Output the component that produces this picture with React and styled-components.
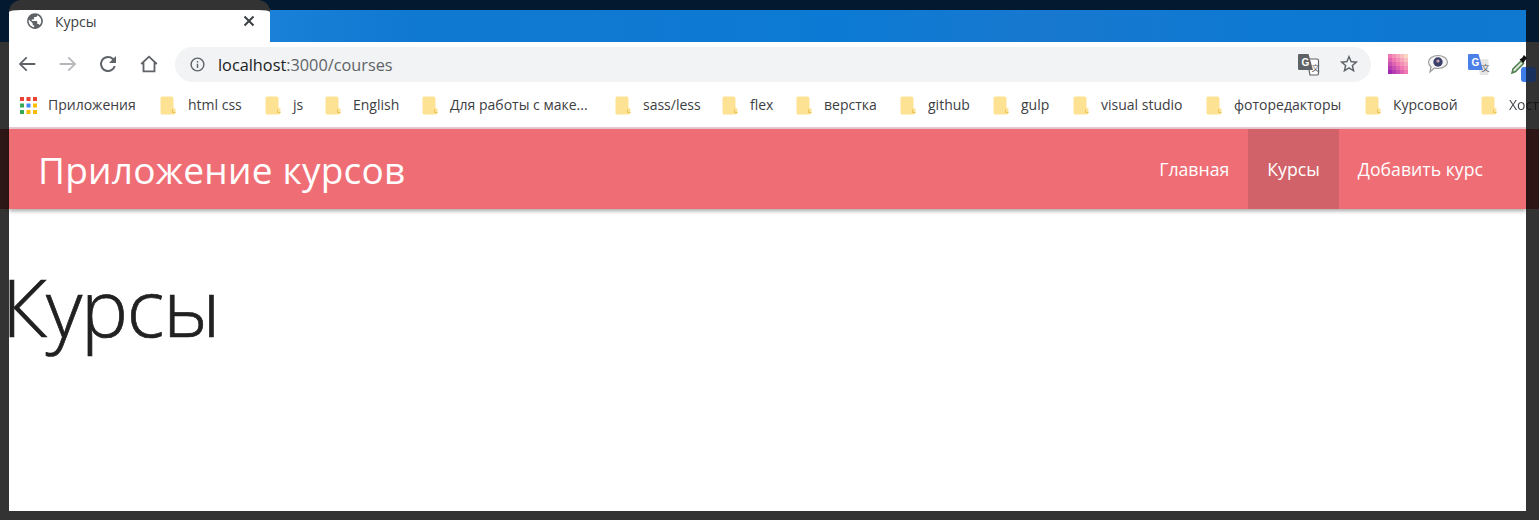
import React from 'react';
import styled, { createGlobalStyle } from 'styled-components';

const GlobalStyle = createGlobalStyle`
  html, body {
    margin: 0;
    padding: 0;
    background: #333;
  }
`;

const Page = styled.div`
  width: 1539px;
  height: 520px;
  overflow: hidden;
  display: flex;
  flex-direction: column;
  background: #333;
  font-family: "Open Sans", "Noto Sans", sans-serif;
`;

const TabStrip = styled.div`
  height: 42px;
  flex: none;
  display: flex;
  padding: 0 13px 0 9px;
  background: #03192f;
`;

const Tab = styled.div`
  width: 261px;
  box-sizing: border-box;
  border-top: 10px solid #333;
  border-radius: 12px 12px 0 0;
  background: #fff;
  display: flex;
  align-items: center;
  padding: 0 14px 10px 17px;
  font-size: 14px;
  color: #3c4043;
`;

const TabTitle = styled.span`
  margin-left: 11px;
  flex: 1;
`;

const Wallpaper = styled.div`
  flex: 1;
  margin-top: 10px;
  background: linear-gradient(90deg, #1a80d8 0%, #0f78d0 12%, #1079d2 26%, #0c7ad4 45%, #1878cf 62%, #0d79d3 80%, #0f78d0 100%);
`;

const Toolbar = styled.div`
  height: 45px;
  flex: none;
  margin: 0 13px 0 9px;
  background: #fff;
  display: flex;
  align-items: center;
  padding-bottom: 1px;
  box-sizing: border-box;
  position: relative;
`;

const NavGroup = styled.div`
  display: flex;
  flex: none;
  margin-left: -2px;
`;

const NavIcon = styled.span`
  width: 40.5px;
  height: 24px;
  display: flex;
  justify-content: center;
  align-items: center;
  flex: none;
`;

const Omnibox = styled.div`
  width: 1196px;
  height: 35px;
  flex: none;
  box-sizing: border-box;
  margin-left: 6px;
  padding: 0 11px 0 14px;
  border-radius: 18px;
  background: #f1f3f4;
  display: flex;
  align-items: center;
  font-size: 16.3px;
  color: #5f6368;
`;

const Host = styled.span`
  color: #202124;
  margin: 1px 0 0 12px;
`;

const Path = styled.span`
  flex: 1;
  margin-top: 1px;
`;

const OmniAction = styled.span`
  display: flex;
  margin-left: ${p => p.$gap || 0}px;
`;

const Extensions = styled.div`
  display: flex;
  align-items: center;
  flex: none;
  margin-left: 17px;
`;

const Extension = styled.span`
  display: flex;
  margin-left: ${p => p.$gap || 0}px;
`;

const Badge = styled.span`
  position: absolute;
  left: 1512px;
  top: 25px;
  width: 15px;
  height: 15px;
  border-radius: 3px;
  background: linear-gradient(90deg, #3d7de8 5px, #17305c 5px);
`;

const BookmarksBar = styled.div`
  height: 42px;
  flex: none;
  margin: 0 13px 0 9px;
  box-sizing: border-box;
  background: #fff;
  border-bottom: 2px solid #eccdd4;
  display: flex;
  align-items: center;
  padding: 0 0 4px 11px;
  gap: 24px;
  white-space: nowrap;
  font-size: 14px;
  color: #3c4043;
`;

const Bookmark = styled.div`
  display: flex;
  align-items: center;
  gap: ${p => p.$gap || 12}px;
  flex: none;
`;

const BookmarkLabel = styled.span`
  display: block;
  width: ${p => p.$width}px;
  margin-bottom: 2px;
`;

const ClippedLabel = styled.span`
  display: block;
  margin-bottom: 2px;
  background: linear-gradient(90deg, #3c4043 17px, #161616 17px);
  -webkit-background-clip: text;
  background-clip: text;
  color: transparent;
`;

const NavBand = styled.div`
  height: 80px;
  flex: none;
  background: #2e1616;
  padding: 0 13px 0 9px;
  position: relative;
`;

const NavBar = styled.nav`
  height: 100%;
  background: #ef6e75;
  box-shadow: 0 2px 4px rgba(0, 0, 0, 0.35);
  display: flex;
  justify-content: space-between;
  padding: 0 24px 0 29px;
  color: #fff;
`;

const Brand = styled.div`
  align-self: center;
  font-size: 37px;
  letter-spacing: 0.25px;
`;

const NavLinks = styled.ul`
  display: flex;
  margin: 0;
  padding: 0;
  list-style: none;
`;

const NavLink = styled.li`
  display: flex;
  align-items: center;
  padding: 0 19px;
  font-size: 17.7px;
  background: ${p => (p.$active ? '#d26269' : 'transparent')};
`;

const Main = styled.main`
  flex: 1;
  margin: 0 13px 9px 9px;
  background: #fff;
`;

const Heading = styled.h1`
  margin: 48px 0 0 -7px;
  font-size: 79px;
  line-height: 100px;
  font-weight: 300;
  letter-spacing: -1.2px;
  color: #212121;
  -webkit-text-stroke: 0.7px #212121;
`;

const Globe = () => (
  <svg width="18" height="18" viewBox="0 0 24 24" fill="#5f6368">
    <path d="M12 1.500C6.200 1.500 1.500 6.200 1.500 12S6.200 22.500 12 22.500 22.500 17.800 22.500 12 17.800 1.500 12 1.500zM10.900 20.300c-4.100-.5-7.300-4-7.300-8.300 0-.6.100-1.300.2-1.900l5 5v1c0 1.200 1 2.100 2.100 2.100v2.100zm7.200-2.700c-.3-.9-1.100-1.500-2-1.500H15V13c0-.6-.5-1-1-1H7.700V9.900h2.100c.6 0 1-.5 1-1V6.800h2.100c1.200 0 2.100-1 2.100-2.100v-.4c3.100 1.200 5.300 4.200 5.300 7.700 0 2.200-.8 4.200-2.200 5.600z" />
  </svg>
);

const CloseIcon = () => (
  <svg width="14" height="14" viewBox="0 0 14 14" stroke="#3c4043" strokeWidth="2">
    <path d="M2.500 2.500l9 9M11.500 2.500l-9 9" />
  </svg>
);

const ArrowIcon = ({ flip, color }) => (
  <svg width="22" height="22" viewBox="0 0 24 24" fill={color} style={flip ? { transform: 'scaleX(-1)' } : undefined}>
    <path d="M21 11H6.800l5.600-5.600L11 4l-8 8 8 8 1.400-1.400L6.800 13H21z" />
  </svg>
);

const ReloadIcon = () => (
  <svg width="24" height="24" viewBox="0 0 24 24" fill="#5f6368">
    <path d="M17.650 6.350A7.960 7.960 0 0 0 12 4a8 8 0 1 0 7.730 10h-2.080A6 6 0 1 1 12 6c1.660 0 3.140.69 4.220 1.780L13 11h7V4z" />
  </svg>
);

const HomeIcon = () => (
  <svg width="22" height="22" viewBox="0 0 24 24" fill="none" stroke="#5f6368" strokeWidth="2">
    <path d="M3.500 12L12 4l8.500 8M6 10.500V20h12v-9.500" />
  </svg>
);

const InfoIcon = () => (
  <svg width="17" height="17" viewBox="0 0 24 24" fill="#5f6368">
    <path d="M12 2a10 10 0 1 0 0 20 10 10 0 0 0 0-20zm0 18a8 8 0 1 1 0-16 8 8 0 0 1 0 16zM11 7h2v2h-2zm0 4h2v6h-2z" />
  </svg>
);

const TranslateIcon = ({ blue }) => (
  <svg width="23" height="23" viewBox="0 0 23 23">
    <path d="M10 6h10a1.500 1.500 0 0 1 1.500 1.500v13a1.500 1.500 0 0 1-1.500 1.500h-7z" fill={blue ? '#e6e6e6' : '#fff'} stroke={blue ? 'none' : '#5f6368'} strokeWidth="1.200" />
    <path d="M2 1h9.500l4.500 16H2.500A1.500 1.500 0 0 1 1 15.500V2a1 1 0 0 1 1-1z" fill={blue ? '#4a80e8' : '#5f6368'} />
    <text x="4.500" y="12.500" fontSize="10" fontWeight="700" fill="#fff" fontFamily="Liberation Sans, sans-serif">G</text>
    <text x="14.500" y="18" fontSize="8" fill="#5f6368" fontFamily="Noto Sans CJK SC, sans-serif">文</text>
  </svg>
);

const StarIcon = () => (
  <svg width="22" height="22" viewBox="0 0 24 24" fill="#5f6368">
    <path d="M22 9.240l-7.190-.62L12 2 9.190 8.630 2 9.240l5.460 4.730L5.820 21 12 17.270 18.180 21l-1.630-7.030L22 9.240zM12 15.400l-3.760 2.270 1-4.280-3.320-2.880 4.380-.38L12 6.100l1.710 4.040 4.380.38-3.320 2.880 1 4.280L12 15.400z" />
  </svg>
);

// mosaic of pink squares, peach in the top right corner, purple bottom left
const mix = (a, b, t) => a.map((v, i) => Math.round(v + (b[i] - v) * t));
const mosaic = Array.from({ length: 25 }, (_, i) => {
  const col = i % 5;
  const row = Math.floor(i / 5);
  const t = (4 - col + row) / 8;
  const rgb = t < 0.5
    ? mix([253, 214, 196], [241, 120, 178], t * 2)
    : mix([241, 120, 178], [158, 40, 176], (t - 0.5) * 2);
  return { col, row, fill: `rgb(${rgb.join(',')})` };
});

const PaletteTile = () => (
  <svg width="20" height="20" viewBox="0 0 20 20">
    {mosaic.map(({ col, row, fill }) => (
      <rect key={`${col}-${row}`} x={col * 4} y={row * 4} width="4" height="4" fill={fill} />
    ))}
  </svg>
);

const BubbleIcon = () => (
  <svg width="22" height="20" viewBox="0 0 22 20">
    <path d="M11 1.500c5.300 0 9.500 2.900 9.500 6.500s-4.200 6.500-9.500 6.500c-1.200 0-2.400-.2-3.500-.5L3 18l1-5.300C2.300 11.500 1.500 9.900 1.500 8c0-3.600 4.200-6.500 9.500-6.500z" fill="#f4f4f4" stroke="#9a9a9a" strokeWidth="1.200" />
    <circle cx="11" cy="8" r="4.700" fill="#3d3f6b" />
    <circle cx="11" cy="7" r="1.600" fill="#c8a8b0" />
  </svg>
);

const DropperIcon = () => (
  <svg width="17" height="20" viewBox="0 0 17 20">
    <path d="M1 19l1-4 8-8 2.500 2.500-8 8z" fill="#dfe8dc" stroke="#4f7f4c" strokeWidth="1.500" />
    <path d="M8.500 5.500l2.500-1.500 2-3 3 3-2 2.500-1.500 2.500z" fill="#111" />
  </svg>
);

const AppsIcon = () => {
  const colors = ['#ea4335', '#ea4335', '#ea4335', '#34a853', '#4285f4', '#fbbc05', '#34a853', '#fbbc05', '#fbbc05'];
  return (
    <svg width="17" height="17" viewBox="0 0 17 17">
      {colors.map((c, i) => (
        <rect key={i} x={(i % 3) * 6.5} y={Math.floor(i / 3) * 6.5} width="4" height="4" fill={c} />
      ))}
    </svg>
  );
};

const FolderIcon = () => (
  <svg width="16" height="19" viewBox="0 0 16 19">
    <path d="M2 .5h9.500a2 2 0 0 1 2 2V12h.5a1.500 1.500 0 0 1 1.500 1.500V16.500a2 2 0 0 1-2 2H2A1.500 1.500 0 0 1 .5 17V2A1.500 1.500 0 0 1 2 .5z" fill="#fde293" />
    <path d="M12.500 13.500v3M12.500 16.500h3" stroke="#e9c25c" strokeWidth="1" fill="none" />
  </svg>
);

const bookmarks = [
  ['html css', 53],
  ['js', 8],
  ['English', 45],
  ['Для работы с маке...', 141],
  ['sass/less', 55],
  ['flex', 22],
  ['верстка', 52],
  ['github', 41],
  ['gulp', 28],
  ['visual studio', 81],
  ['фоторедакторы', 107],
  ['Курсовой', 64],
];

const App = () => (
  <Page>
    <GlobalStyle />
    <TabStrip>
      <Tab>
        <Globe />
        <TabTitle>Курсы</TabTitle>
        <CloseIcon />
      </Tab>
      <Wallpaper />
    </TabStrip>
    <Toolbar>
      <NavGroup>
        <NavIcon><ArrowIcon color="#5f6368" /></NavIcon>
        <NavIcon><ArrowIcon flip color="#b5b7ba" /></NavIcon>
        <NavIcon><ReloadIcon /></NavIcon>
        <NavIcon><HomeIcon /></NavIcon>
      </NavGroup>
      <Omnibox>
        <InfoIcon />
        <Host>localhost</Host>
        <Path>:3000/courses</Path>
        <OmniAction><TranslateIcon /></OmniAction>
        <OmniAction $gap={18}><StarIcon /></OmniAction>
      </Omnibox>
      <Extensions>
        <Extension><PaletteTile /></Extension>
        <Extension $gap={19}><BubbleIcon /></Extension>
        <Extension $gap={18}><TranslateIcon blue /></Extension>
        <Extension $gap={21}><DropperIcon /></Extension>
      </Extensions>
      <Badge />
    </Toolbar>
    <BookmarksBar>
      <Bookmark $gap={11}>
        <AppsIcon />
        <BookmarkLabel $width={88}>Приложения</BookmarkLabel>
      </Bookmark>
      {bookmarks.map(([label, width]) => (
        <Bookmark key={label}>
          <FolderIcon />
          <BookmarkLabel $width={width}>{label}</BookmarkLabel>
        </Bookmark>
      ))}
      <Bookmark>
        <FolderIcon />
        <ClippedLabel>Хост</ClippedLabel>
      </Bookmark>
    </BookmarksBar>
    <NavBand>
      <NavBar>
        <Brand>Приложение курсов</Brand>
        <NavLinks>
          <NavLink>Главная</NavLink>
          <NavLink $active>Курсы</NavLink>
          <NavLink>Добавить курс</NavLink>
        </NavLinks>
      </NavBar>
    </NavBand>
    <Main>
      <Heading>Курсы</Heading>
    </Main>
  </Page>
);

export default App;
